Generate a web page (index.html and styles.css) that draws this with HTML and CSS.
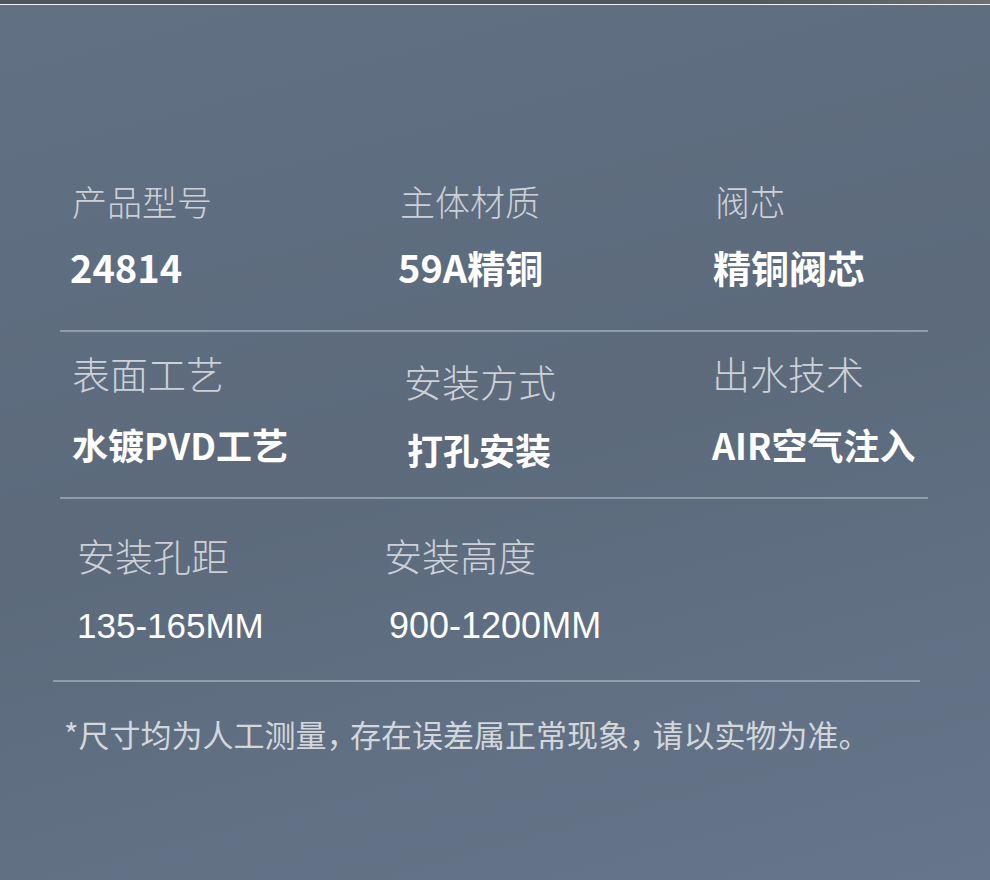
FILE: index.html
```html
<!DOCTYPE html>
<html lang="zh-CN">
<head>
    <meta charset="UTF-8">
    <meta name="viewport" content="width=device-width, initial-scale=1.0">
    <title>产品参数</title>
    <link rel="stylesheet" href="styles.css">
</head>
<body>

    <div class="top-bar"></div>

    <div class="specs">
        <div class="row row-first">
            <div class="cell">
                <div class="label">产品型号</div>
                <div class="value">24814</div>
            </div>
            <div class="cell">
                <div class="label">主体材质</div>
                <div class="value">59A精铜</div>
            </div>
            <div class="cell">
                <div class="label">阀芯</div>
                <div class="value">精铜阀芯</div>
            </div>
        </div>

        <div class="row row-second">
            <div class="cell">
                <div class="label">表面工艺</div>
                <div class="value">水镀PVD工艺</div>
            </div>
            <div class="cell cell-low">
                <div class="label">安装方式</div>
                <div class="value">打孔安装</div>
            </div>
            <div class="cell cell-back">
                <div class="label">出水技术</div>
                <div class="value">AIR空气注入</div>
            </div>
        </div>

        <div class="row row-last">
            <div class="cell">
                <div class="label">安装孔距</div>
                <div class="value value-num">135-165MM</div>
            </div>
            <div class="cell cell-right">
                <div class="label">安装高度</div>
                <div class="value value-num">900-1200MM</div>
            </div>
        </div>

        <p class="note">*尺寸均为人工测量<span class="comma">，</span>存在误差属正常现象<span class="comma">，</span>请以实物为准。</p>
    </div>

</body>
</html>
```

FILE: styles.css
```css
* {
    margin: 0;
    padding: 0;
    box-sizing: border-box;
}
html, body {
    height: 100%;
}
body {
    font-family: "Noto Sans CJK SC", "Noto Sans", sans-serif;
    background: linear-gradient(165deg, #617083 0%, #5c6a7c 50%, #66758a 100%);
    color: #fff;
    overflow: hidden;
}
.top-bar {
    height: 5px;
    background: linear-gradient(90deg, #4d565d 0%, #4f575d 75%, #6b7174 100%);
    border-bottom: 1px solid #f2f2f2;
}
.specs {
    padding-top: 178px;
}
.row {
    display: grid;
    grid-template-columns: 328px 315px 1fr;
    margin: 0 62px 0 60px;
    padding-left: 12px;
    border-bottom: 2px solid rgba(205, 215, 228, 0.45);
}
.label {
    font-size: 38px;
    line-height: 1;
    font-weight: 300;
    color: #cdd1d7;
}
.value {
    font-size: 36px;
    line-height: 1;
    font-weight: 700;
    color: #fff;
}

/* row 1 */
.row-first {
    padding-bottom: 44px;
}
.row-first .label {
    font-size: 35px;
}
.row-first .value {
    margin: 30px 0 0 -2px;
    font-size: 38px;
}

/* row 2 */
.row-second {
    padding-top: 22px;
    padding-bottom: 30px;
}
.row-second .value {
    margin-top: 34px;
}
.row-second .cell-low {
    padding: 8px 0 0 4px;
}
.row-second .cell-low .value {
    margin: 31px 0 0 3px;
}
.row-second .cell-back {
    margin-left: -3px;
}

/* row 3 */
.row-last {
    grid-template-columns: 307px 1fr;
    margin: 0 70px 0 53px;
    padding-left: 24px;
    padding-top: 37px;
    padding-bottom: 36px;
}
.value-num {
    font-family: "Liberation Sans", Arial, sans-serif;
    font-weight: 400;
    font-size: 35px;
}
.row-last .value-num {
    margin-top: 34px;
}
.cell-right .value-num {
    margin-left: 5px;
    font-size: 36px;
}

.note {
    margin: 36px 0 0 64px;
    font-size: 31px;
    line-height: 1;
    font-weight: 400;
    color: #d3d7dc;
    white-space: nowrap;
}
.comma {
    font-feature-settings: "halt";
    padding-right: 8px;
}
```
